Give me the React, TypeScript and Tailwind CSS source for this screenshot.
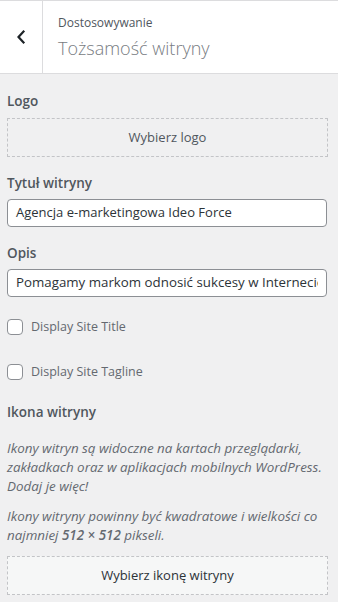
export default function App() {
  const font = { fontFamily: '"Open Sans", "Noto Sans", sans-serif' };
  return (
    <div className="w-[338px] h-[602px] overflow-hidden bg-[#f0f0f1]" style={font}>
      <div className="flex h-[74px] bg-white border-t border-t-[#dcdcde] border-b border-b-[#dcdcde]">
        <div className="w-[43px] shrink-0 border-r border-r-[#dcdcde] flex items-center justify-center">
          <svg width="10" height="16" viewBox="0 0 10 16">
            <path d="M7.5 2.5 L2.5 8 L7.5 13.5" fill="none" stroke="#1d2327" strokeWidth="2.2" strokeLinecap="square" strokeLinejoin="miter" />
          </svg>
        </div>
        <div className="pl-[15px] pt-[12px]">
          <div className="text-[12px] leading-[20px] text-[#50575e]">Dostosowywanie</div>
          <div className="text-[18px] leading-[28px] font-light text-[#787c82] mt-[1px]">Tożsamość witryny</div>
        </div>
      </div>
      <div className="pl-[7px] pr-[10px]">
        <div className="mt-[17px] text-[13.5px] leading-[20px] font-semibold text-[#50575e]">Logo</div>
        <div className="mt-[7px] h-[39px] border border-dashed border-[#c3c4c7] flex items-center justify-center text-[13px] text-[#50575e]">
          Wybierz logo
        </div>
        <div className="mt-[16px] text-[13.5px] leading-[20px] font-semibold text-[#50575e]">Tytuł witryny</div>
        <div className="mt-[6px] h-[28px] w-[320px] bg-white border border-[#8c8f94] rounded-[4px] flex items-center pl-[8px] text-[13px] text-[#2c3338] overflow-hidden whitespace-nowrap">
          Agencja e-marketingowa Ideo Force
        </div>
        <div className="mt-[16px] text-[13.5px] leading-[20px] font-semibold text-[#50575e]">Opis</div>
        <div className="mt-[6px] h-[28px] w-[320px] bg-white border border-[#8c8f94] rounded-[4px] flex items-center pl-[8px] pr-[8px] text-[13.3px] text-[#2c3338] overflow-hidden whitespace-nowrap">
          <span className="overflow-hidden">Pomagamy markom odnosić sukcesy w Internecie</span>
        </div>
        <div className="mt-[22px] flex items-center h-[16px]">
          <div className="w-[16px] h-[16px] bg-white border border-[#8c8f94] rounded-[4px]" />
          <span className="ml-[8px] text-[12.5px] text-[#646970]">Display Site Title</span>
        </div>
        <div className="mt-[29px] flex items-center h-[16px]">
          <div className="w-[16px] h-[16px] bg-white border border-[#8c8f94] rounded-[4px]" />
          <span className="ml-[8px] text-[12.5px] text-[#646970]">Display Site Tagline</span>
        </div>
        <div className="mt-[22px] text-[13.5px] leading-[20px] font-semibold text-[#50575e]">Ikona witryny</div>
        <p className="mt-[17px] italic text-[13.4px] leading-[19px] text-[#646970]">
          Ikony witryn są widoczne na kartach przeglądarki, zakładkach oraz w aplikacjach mobilnych WordPress. Dodaj je więc!
        </p>
        <p className="mt-[11px] italic text-[13.4px] leading-[19px] text-[#646970]">
          Ikony witryny powinny być kwadratowe i wielkości co najmniej <span className="font-semibold">512 × 512</span> pikseli.
        </p>
        <div className="mt-[11px] h-[39px] border border-dashed border-[#c3c4c7] bg-[#f6f7f7] flex items-center justify-center text-[13px] text-[#2c3338]">
          Wybierz ikonę witryny
        </div>
      </div>
    </div>
  );
}
